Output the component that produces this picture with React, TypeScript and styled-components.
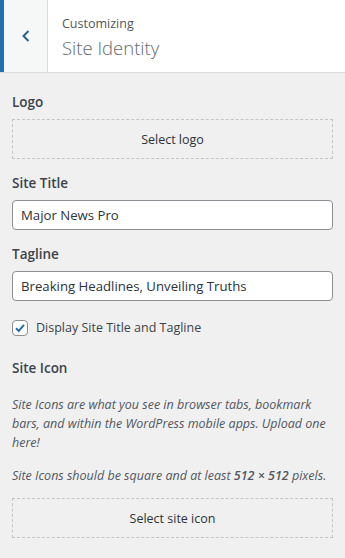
import styled, { createGlobalStyle } from "styled-components";

const Global = createGlobalStyle`
  html, body {
    margin: 0;
    padding: 0;
    background: #f0f0f1;
  }
  body {
    font-family: "Open Sans", "Noto Sans", sans-serif;
    color: #3c434a;
  }
`;

const Panel = styled.div`
  width: 345px;
  min-height: 558px;
  background: #f0f0f1;
`;

const Header = styled.header`
  display: flex;
  height: 72px;
  background: #fff;
  border-bottom: 1px solid #dcdcde;
`;

const BackButton = styled.button`
  width: 48px;
  height: 100%;
  padding: 0;
  display: flex;
  align-items: center;
  justify-content: center;
  background: #f6f7f7;
  border: 0;
  border-left: 4px solid #2271b1;
  border-right: 1px solid #dcdcde;
  color: #2c5e8c;
  cursor: pointer;
`;

const HeaderText = styled.div`
  display: flex;
  flex-direction: column;
  padding: 15px 0 0 14px;
`;

const Crumb = styled.span`
  font-size: 12.5px;
  color: #50575e;
  line-height: 18px;
`;

const Title = styled.h2`
  margin: 2px 0 0;
  font-size: 18.5px;
  font-weight: 300;
  color: #646970;
  line-height: 26px;
`;

const Body = styled.div`
  display: flex;
  flex-direction: column;
  padding: 19px 12px 20px;
`;

const Section = styled.div<{ $gap?: number }>`
  display: flex;
  flex-direction: column;
  margin-bottom: ${(p) => p.$gap ?? 14}px;
`;

const Label = styled.span`
  font-size: 13.5px;
  font-weight: 600;
  color: #3c434a;
  line-height: 20px;
  margin-bottom: 7px;
`;

const DashedButton = styled.button`
  height: 40px;
  width: 100%;
  background: transparent;
  border: 1px dashed #c3c4c7;
  font-family: inherit;
  font-size: 12.5px;
  color: #2c3338;
  cursor: pointer;
`;

const TextInput = styled.input`
  box-sizing: border-box;
  width: 100%;
  height: 30px;
  padding: 0 8px;
  border: 1px solid #8c8f94;
  border-radius: 4px;
  background: #fff;
  font-family: inherit;
  font-size: 13.2px;
  color: #2c3338;
  outline: none;
`;

const CheckRow = styled.label`
  display: flex;
  align-items: center;
  gap: 8px;
  font-size: 12.5px;
  color: #3c434a;
  margin: 18px 0 22px;
`;

const Box = styled.span`
  box-sizing: border-box;
  width: 16px;
  height: 16px;
  border: 1px solid #8c8f94;
  border-radius: 4px;
  background: #fff;
  display: flex;
  align-items: center;
  justify-content: center;
`;

const Note = styled.p`
  margin: 0 0 14px;
  font-size: 12.5px;
  font-style: italic;
  line-height: 19px;
  color: #50575e;

  &:first-of-type {
    margin-top: 10px;
  }

  &:last-of-type {
    margin-bottom: 13px;
  }

  strong {
    font-weight: 600;
  }
`;

export default function App() {
  return (
    <Panel>
      <Global />
      <Header>
        <BackButton aria-label="Back">
          <svg width="12" height="16" viewBox="0 0 12 16">
            <path d="M8.5 3 L3.5 8 L8.5 13" fill="none" stroke="currentColor" strokeWidth="2" />
          </svg>
        </BackButton>
        <HeaderText>
          <Crumb>Customizing</Crumb>
          <Title>Site Identity</Title>
        </HeaderText>
      </Header>
      <Body>
        <Section>
          <Label>Logo</Label>
          <DashedButton>Select logo</DashedButton>
        </Section>
        <Section>
          <Label>Site Title</Label>
          <TextInput defaultValue="Major News Pro" />
        </Section>
        <Section $gap={0}>
          <Label>Tagline</Label>
          <TextInput defaultValue="Breaking Headlines, Unveiling Truths" />
        </Section>
        <CheckRow>
          <Box>
            <svg width="12" height="12" viewBox="0 0 12 12">
              <path d="M2 6.2 L4.8 9 L10 2.8" fill="none" stroke="#2271b1" strokeWidth="2" />
            </svg>
          </Box>
          Display Site Title and Tagline
        </CheckRow>
        <Section $gap={0}>
          <Label>Site Icon</Label>
          <Note>
            Site Icons are what you see in browser tabs, bookmark bars, and within the WordPress mobile apps. Upload one here!
          </Note>
          <Note>
            Site Icons should be square and at least <strong>512 × 512</strong> pixels.
          </Note>
          <DashedButton>Select site icon</DashedButton>
        </Section>
      </Body>
    </Panel>
  );
}
